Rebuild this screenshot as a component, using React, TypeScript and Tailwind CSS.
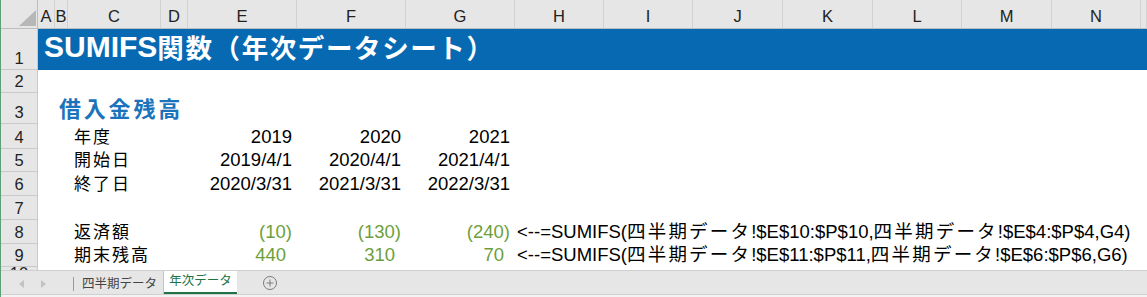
import React from "react";

const FONT = "font-['Liberation_Sans','Noto_Sans_CJK_JP',sans-serif]";
const GRID =
  "grid grid-cols-[37px_17px_13px_93px_27px_109px_109px_109px_89px_89px_90px_90px_89px_90px_89px_1fr]";

const letters = ["A", "B", "C", "D", "E", "F", "G", "H", "I", "J", "K", "L", "M", "N", ""];

function RowHead({ n, top }: { n: number; top?: boolean }) {
  return (
    <div
      className={`col-start-1 flex justify-center overflow-hidden border-r border-b border-[#c9c9c9] bg-[#e6e6e6] text-[16.5px] leading-none text-[#222] ${
        top ? "items-start" : "items-end pb-[3px]"
      }`}
    >
      <span className={top ? "-mt-[2px]" : ""}>{n}</span>
    </div>
  );
}

function Cjk({ children }: { children: React.ReactNode }) {
  return <span className="tracking-[2.2px]">{children}</span>;
}

function Formula({ a, b }: { a: string; b: string }) {
  return (
    <div className="col-start-9 col-span-8 flex items-end whitespace-nowrap pb-[3px] pl-[2px] text-[18.5px] leading-none text-black">
      <span>
        {"<--=SUMIFS("}
        <Cjk>四半期データ</Cjk>
        {"!" + a + ","}
        <Cjk>四半期データ</Cjk>
        {"!" + b}
      </span>
    </div>
  );
}

function Label({ text }: { text: string }) {
  return (
    <div className="col-start-4 col-span-2 flex items-end whitespace-nowrap pb-[3px] pl-[6px] text-[17px] leading-none tracking-[2px] text-black">
      {text}
    </div>
  );
}

function Num({
  col,
  text,
  green,
  pos,
}: {
  col: string;
  text: string;
  green?: boolean;
  pos?: boolean;
}) {
  return (
    <div
      className={`${col} flex items-end justify-end whitespace-nowrap pb-[3px] text-[18.5px] leading-none ${
        green ? "text-[#6c9f3b]" : "text-black"
      } ${pos ? "pr-[11px]" : "pr-[5px]"}`}
    >
      {text}
    </div>
  );
}

export default function App() {
  return (
    <div className={`${FONT} relative h-[297px] w-[1147px] overflow-hidden border-l border-[#5f9e78] bg-white`}>
      <div
        className={`${GRID} h-[270px] grid-rows-[29px_41px_23px_31px_25px_23px_24px_24px_24px_23px_23px] overflow-hidden`}
      >
        {/* header row */}
        <div className="relative border-r border-b border-[#bdbdbd] bg-[#e6e6e6]">
          <svg className="absolute left-[18px] top-[10px]" width="17" height="16" viewBox="0 0 17 16">
            <polygon points="17,0 17,16 0,16" fill="#b7b7b7" />
          </svg>
        </div>
        {letters.map((l, i) => (
          <div
            key={i}
            className="flex items-end justify-center border-r border-b border-r-[#d2d2d2] border-b-[#bdbdbd] bg-[#e6e6e6] pb-[4px] text-[16.5px] leading-none text-[#222]"
          >
            {l}
          </div>
        ))}

        {/* row 1 */}
        <RowHead n={1} />
        <div className="col-start-2 col-span-15 flex items-end whitespace-nowrap bg-[#0769b2] pb-[8px] pl-[6px] font-bold leading-none text-white">
          <span className="text-[30px]">SUMIFS</span>
          <span className="text-[26.5px] tracking-[1.6px]">関数（年次データシート）</span>
        </div>

        {/* row 2 */}
        <RowHead n={2} />
        <div className="col-start-2 col-span-15" />

        {/* row 3 */}
        <RowHead n={3} />
        <div className="col-start-3 col-span-5 flex items-end whitespace-nowrap pb-[3px] pl-[4px] text-[22px] font-bold leading-none tracking-[2.8px] text-[#1b74bb]">
          借入金残高
        </div>

        {/* row 4 */}
        <RowHead n={4} />
        <Label text="年度" />
        <Num col="col-start-6" text="2019" />
        <Num col="col-start-7" text="2020" />
        <Num col="col-start-8" text="2021" />

        {/* row 5 */}
        <RowHead n={5} />
        <Label text="開始日" />
        <Num col="col-start-6" text="2019/4/1" />
        <Num col="col-start-7" text="2020/4/1" />
        <Num col="col-start-8" text="2021/4/1" />

        {/* row 6 */}
        <RowHead n={6} />
        <Label text="終了日" />
        <Num col="col-start-6" text="2020/3/31" />
        <Num col="col-start-7" text="2021/3/31" />
        <Num col="col-start-8" text="2022/3/31" />

        {/* row 7 */}
        <RowHead n={7} />
        <div className="col-start-2 col-span-15" />

        {/* row 8 */}
        <RowHead n={8} />
        <Label text="返済額" />
        <Num col="col-start-6" text="(10)" green />
        <Num col="col-start-7" text="(130)" green />
        <Num col="col-start-8" text="(240)" green />
        <Formula a="$E$10:$P$10" b="$E$4:$P$4,G4)" />

        {/* row 9 */}
        <RowHead n={9} />
        <Label text="期末残高" />
        <Num col="col-start-6" text="440" green pos />
        <Num col="col-start-7" text="310" green pos />
        <Num col="col-start-8" text="70" green pos />
        <Formula a="$E$11:$P$11" b="$E$6:$P$6,G6)" />

        {/* row 10 */}
        <RowHead n={10} top />
      </div>

      {/* sheet tab bar */}
      <div className="relative flex h-[27px] items-stretch border-t border-[#d0d0d0] bg-[#e6e6e6]">
        <div className="flex w-[72px] items-center">
          <svg className="ml-[18px]" width="6" height="8" viewBox="0 0 6 8">
            <polygon points="5,0 5,8 0,4" fill="#c2c2c2" />
          </svg>
          <svg className="ml-[16px]" width="6" height="8" viewBox="0 0 6 8">
            <polygon points="0,0 0,8 5,4" fill="#c2c2c2" />
          </svg>
        </div>
        <div className="my-[6px] w-px bg-[#9a9a9a]" />
        <div className="flex w-[90px] items-center border-r border-[#c6c6c6] pl-[8px] text-[12.5px] leading-none text-[#444]">
          四半期データ
        </div>
        <div className="mb-[3px] flex w-[73px] items-center justify-center border-b-2 border-[#217346] bg-white text-[12.5px] leading-none text-[#217346]">
          年次データ
        </div>
        <div className="ml-[25px] flex items-center pb-[2px]">
          <svg width="16" height="16" viewBox="0 0 16 16">
            <circle cx="8" cy="8" r="6.5" fill="none" stroke="#7a7a7a" strokeWidth="1" />
            <line x1="8" y1="4.5" x2="8" y2="11.5" stroke="#7a7a7a" strokeWidth="1" />
            <line x1="4.5" y1="8" x2="11.5" y2="8" stroke="#7a7a7a" strokeWidth="1" />
          </svg>
        </div>
        <div className="absolute bottom-0 left-0 right-0 h-[3px] border-t border-[#d0d0d0] bg-[#f3f3f3]" />
      </div>
    </div>
  );
}
